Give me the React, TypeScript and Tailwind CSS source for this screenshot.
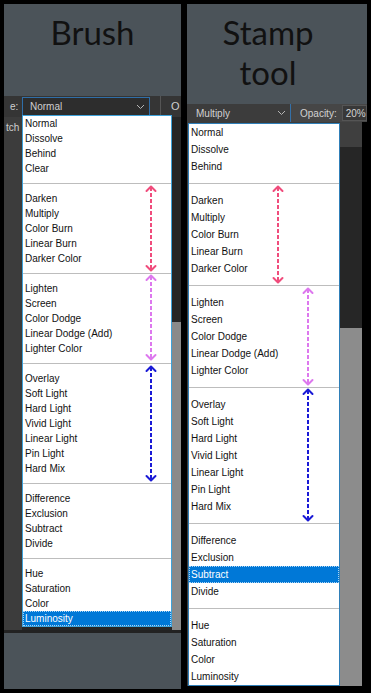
const leftGroups = [
  ["Normal", "Dissolve", "Behind", "Clear"],
  ["Darken", "Multiply", "Color Burn", "Linear Burn", "Darker Color"],
  ["Lighten", "Screen", "Color Dodge", "Linear Dodge (Add)", "Lighter Color"],
  ["Overlay", "Soft Light", "Hard Light", "Vivid Light", "Linear Light", "Pin Light", "Hard Mix"],
  ["Difference", "Exclusion", "Subtract", "Divide"],
  ["Hue", "Saturation", "Color", "Luminosity"],
];

const rightGroups = [
  ["Normal", "Dissolve", "Behind"],
  ...leftGroups.slice(1),
];

type ListProps = {
  groups: string[][];
  selected: string;
  tall?: boolean;
};

function BlendList({ groups, selected, tall }: ListProps) {
  const row = tall ? "h-[17px]" : "h-[15px]";
  return (
    <div className="flex flex-col bg-white font-['Liberation_Sans',Arial,sans-serif] text-[10px] text-[#111]">
      {groups.map((group, gi) => (
        <div key={gi} className="flex flex-col">
          {gi > 0 && (
            <div className={`${row} flex items-center`}>
              <div className="h-px w-full bg-[#bdbdbd]" />
            </div>
          )}
          {group.map((name) =>
            name === selected ? (
              <div
                key={name}
                className={`${row} flex items-center border border-dotted border-[#a9d4f5] bg-[#0078d7] pl-px leading-none text-white`}
              >
                {name}
              </div>
            ) : (
              <div key={name} className={`${row} flex items-center pl-[2px] leading-none`}>
                {name}
              </div>
            ),
          )}
        </div>
      ))}
    </div>
  );
}

type ArrowProps = {
  x: number;
  y1: number;
  y2: number;
  color: string;
};

// dashed double-headed arrow drawn over the menu
function Arrow({ x, y1, y2, color }: ArrowProps) {
  const h = y2 - y1;
  return (
    <svg
      className="pointer-events-none absolute"
      style={{ left: x - 6, top: y1, width: 12, height: h }}
      viewBox={`0 0 12 ${h}`}
      fill="none"
      stroke={color}
      strokeWidth={2}
    >
      <line x1={6} y1={2} x2={6} y2={h - 2} strokeDasharray="4 2" />
      <polyline points={`1.5,6 6,1.5 10.5,6`} strokeLinejoin="round" strokeLinecap="round" />
      <polyline points={`1.5,${h - 6} 6,${h - 1.5} 10.5,${h - 6}`} strokeLinejoin="round" strokeLinecap="round" />
    </svg>
  );
}

function Chevron() {
  return (
    <svg width="9" height="6" viewBox="0 0 9 6" fill="none" stroke="#b5b5b5" strokeWidth="1">
      <polyline points="1,1 4.5,4.5 8,1" />
    </svg>
  );
}

function BrushPanel() {
  return (
    <div className="relative flex h-full w-[177px] flex-col bg-[#4b5359]">
      <div className="h-[92px] pt-[12px] text-center font-['Lato',sans-serif] text-[33px] leading-none text-[#111]">
        Brush
      </div>

      <div className="flex h-[21px] items-center bg-[#353535] font-['Liberation_Sans',Arial,sans-serif] text-[10px] text-[#cfcfcf]">
        <span className="w-[18px] pl-[6px]">e:</span>
        <div className="flex h-[20px] w-[128px] items-center justify-between border border-[#2f6ea8] bg-[#2d2d2d] pl-[7px] pr-[4px]">
          <span>Normal</span>
          <Chevron />
        </div>
        <div className="ml-[10px] h-[21px] w-px bg-[#555]" />
        <span className="ml-[10px] text-[11px]">O</span>
      </div>

      <div className="flex h-[513px]">
        <div className="flex w-[18px] flex-col bg-[#3c3c3c]">
          <div className="flex h-[20px] items-center pl-[2px] font-['Liberation_Sans',Arial,sans-serif] text-[10px] text-[#cfcfcf]">
            tch
          </div>
        </div>
        <div className="flex-1 bg-[#262626]" />
        <div className="flex w-[9px] flex-col">
          <div className="h-[205px] bg-[#262626]" />
          <div className="flex-1 bg-[#8a8a8a]" />
        </div>
      </div>

      <div className="flex-1 border-t-[3px] border-[#222]" />

      <div className="absolute left-[18px] top-[111px] w-[150px] border border-[#3ea2da]">
        <BlendList groups={leftGroups} selected="Luminosity" />
      </div>

      <Arrow x={147} y1={181} y2={268} color="#f04c7c" />
      <Arrow x={147} y1={270} y2={357} color="#dd78ee" />
      <Arrow x={147} y1={361} y2={478} color="#1a1ad6" />
    </div>
  );
}

function StampPanel() {
  return (
    <div className="relative flex h-full w-[180px] flex-col bg-[#4b5359]">
      <div className="h-[100px] pr-[18px] pt-[8px] text-center font-['Lato',sans-serif] text-[33px] leading-[40px] text-[#111]">
        Stamp
        <br />
        tool
      </div>

      <div className="flex h-[18px] items-center font-['Liberation_Sans',Arial,sans-serif] text-[10px] text-[#d2d2d2]">
        <div className="flex h-full w-[104px] items-center justify-between border-r border-[#3470a8] bg-[#3c3c3c] pl-[9px] pr-[4px]">
          <span>Multiply</span>
          <Chevron />
        </div>
        <div className="flex h-full flex-1 items-center bg-[#464646] pl-[9px]">
          <span>Opacity:</span>
          <div className="ml-[5px] flex h-[16px] flex-1 items-center border border-[#555] bg-[#383838] pl-[3px]">
            20%
          </div>
        </div>
      </div>

      <div className="flex h-[564px]">
        <div className="w-[153px] bg-[#3c3c3c]" />
        <div className="flex w-[22px] flex-col">
          <div className="h-[25px] bg-[#3f3f3f]" />
          <div className="h-[181px] bg-[#262626]" />
          <div className="flex-1 bg-[#8c8c8c]" />
        </div>
        <div className="flex-1 bg-black" />
      </div>
      <div className="flex-1 bg-black" />

      <div className="absolute left-px top-[119px] w-[152px] border border-[#2f7fb8]">
        <BlendList groups={rightGroups} selected="Subtract" tall />
      </div>

      <Arrow x={91} y1={181} y2={280} color="#f04c7c" />
      <Arrow x={121} y1={283} y2={382} color="#dd78ee" />
      <Arrow x={121} y1={384} y2={518} color="#1a1ad6" />
    </div>
  );
}

export default function App() {
  return (
    <div className="flex h-[693px] w-[371px] gap-[6px] bg-black p-[4px]">
      <BrushPanel />
      <StampPanel />
    </div>
  );
}
